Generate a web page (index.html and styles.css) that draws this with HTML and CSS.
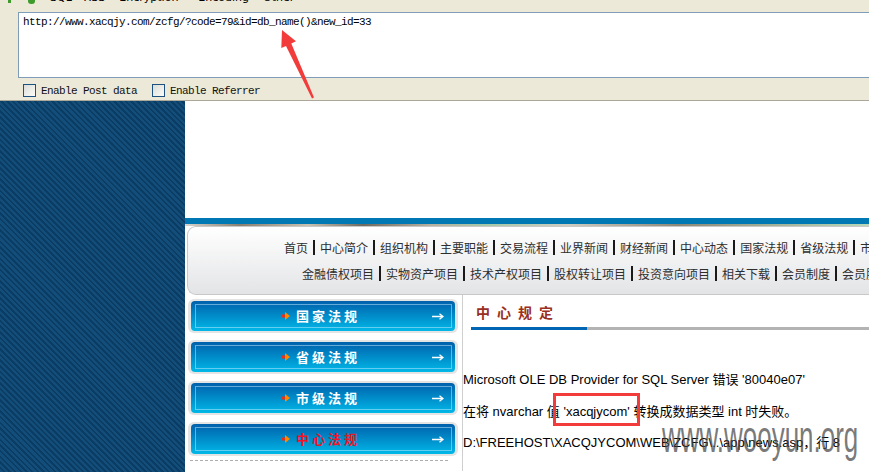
FILE: index.html
```html
<!DOCTYPE html>
<html lang="zh">
<head>
<meta charset="utf-8">
<title>中心规定</title>
<link rel="stylesheet" href="styles.css">
</head>
<body>
<div class="toolbar">
  <div class="menubar">
    <span class="mico mico1"></span>
    <span class="mico mico2"></span>
    <div class="menu-inner">
      <span class="mi mi-sql">SQL</span>
      <span class="mi mi-xss">XSS</span>
      <span class="mi mi-enc">Encryption</span>
      <span class="mi mi-cod">Encoding</span>
      <span class="mi">Other</span>
    </div>
  </div>
  <div class="urlbox">http://www.xacqjy.com/zcfg/?code=79&amp;id=db_name()&amp;new_id=33</div>
  <div class="opts">
    <label class="opt"><span class="cb"></span>Enable Post data</label>
    <label class="opt"><span class="cb"></span>Enable Referrer</label>
  </div>
</div>

<div class="page">
  <aside class="side"></aside>
  <main class="main">
    <div class="header"></div>
    <div class="bluebar"></div>
    <div class="strip"></div>
    <nav class="nav">
      <div class="navrow r1">
        <span>首页</span><i class="sep"></i><span>中心简介</span><i class="sep"></i><span>组织机构</span><i class="sep"></i><span>主要职能</span><i class="sep"></i><span>交易流程</span><i class="sep"></i><span>业界新闻</span><i class="sep"></i><span>财经新闻</span><i class="sep"></i><span>中心动态</span><i class="sep"></i><span>国家法规</span><i class="sep"></i><span>省级法规</span><i class="sep"></i><span>市级法规</span>
      </div>
      <div class="navrow r2">
        <span>金融债权项目</span><i class="sep"></i><span>实物资产项目</span><i class="sep"></i><span>技术产权项目</span><i class="sep"></i><span>股权转让项目</span><i class="sep"></i><span>投资意向项目</span><i class="sep"></i><span>相关下载</span><i class="sep"></i><span>会员制度</span><i class="sep"></i><span>会员服务</span>
      </div>
    </nav>
    <div class="content">
      <div class="lcol">
        <a class="btn"><span class="btn-in"><span class="btn-c"><svg class="bullet" width="8" height="8" viewBox="0 0 8 8"><rect x="0" y="2.5" width="3" height="3" fill="#e8301a"/><polygon points="3,0 8,4 3,8" fill="#ff8a00"/></svg><span class="btn-t">国家法规</span></span><svg class="btn-ar" width="12" height="7" viewBox="0 0 12 7"><path d="M0 3.5H10.5M7.5 0.8L11 3.5L7.5 6.2" fill="none" stroke="#fff" stroke-width="1.4"/></svg></span></a>
        <a class="btn"><span class="btn-in"><span class="btn-c"><svg class="bullet" width="8" height="8" viewBox="0 0 8 8"><rect x="0" y="2.5" width="3" height="3" fill="#e8301a"/><polygon points="3,0 8,4 3,8" fill="#ff8a00"/></svg><span class="btn-t">省级法规</span></span><svg class="btn-ar" width="12" height="7" viewBox="0 0 12 7"><path d="M0 3.5H10.5M7.5 0.8L11 3.5L7.5 6.2" fill="none" stroke="#fff" stroke-width="1.4"/></svg></span></a>
        <a class="btn"><span class="btn-in"><span class="btn-c"><svg class="bullet" width="8" height="8" viewBox="0 0 8 8"><rect x="0" y="2.5" width="3" height="3" fill="#e8301a"/><polygon points="3,0 8,4 3,8" fill="#ff8a00"/></svg><span class="btn-t">市级法规</span></span><svg class="btn-ar" width="12" height="7" viewBox="0 0 12 7"><path d="M0 3.5H10.5M7.5 0.8L11 3.5L7.5 6.2" fill="none" stroke="#fff" stroke-width="1.4"/></svg></span></a>
        <a class="btn"><span class="btn-in"><span class="btn-c"><svg class="bullet" width="8" height="8" viewBox="0 0 8 8"><rect x="0" y="2.5" width="3" height="3" fill="#e8301a"/><polygon points="3,0 8,4 3,8" fill="#ff8a00"/></svg><span class="btn-t btn-t-red">中心法规</span></span><svg class="btn-ar" width="12" height="7" viewBox="0 0 12 7"><path d="M0 3.5H10.5M7.5 0.8L11 3.5L7.5 6.2" fill="none" stroke="#fff" stroke-width="1.4"/></svg></span></a>
        <div class="dash"></div>
      </div>
      <div class="rcol">
        <h2 class="title">中心规定</h2>
        <div class="uline"></div>
        <p class="msg">Microsoft OLE DB Provider for SQL Server 错误 '80040e07'</p>
        <p class="msg">在将 nvarchar 值 'xacqjycom' 转换成数据类型 int 时失败。</p>
        <p class="msg">D:\FREEHOST\XACQJYCOM\WEB\ZCFG\..\app\news.asp，行 8</p>
      </div>
    </div>
  </main>
</div>

<div class="redbox"></div>
<div class="watermark">www.wooyun.org</div>
<svg class="arrow" width="869" height="472" viewBox="0 0 869 472">
  <polygon points="282,30 296,41.3 291.3,43.6 314,97.6 312,98.4 286,46 281.3,48" fill="#f23c3c"/>
</svg>
</body>
</html>
```

FILE: styles.css
```css
html, body {
  margin: 0;
  padding: 0;
}
body {
  width: 869px;
  height: 472px;
  overflow: hidden;
  background: #fff;
  font-family: "Liberation Sans", "Noto Sans CJK SC", sans-serif;
  position: relative;
}

/* ---------- toolbar ---------- */
.toolbar {
  height: 100px;
  background: #ECE9D8;
  border-bottom: 1px solid #ACA899;
  overflow: hidden;
}
.menubar {
  display: flex;
  align-items: flex-start;
  height: 12px;
  overflow: hidden;
}
.menu-inner {
  display: flex;
  margin-top: -8px;
  height: 12px;
  font-family: "DejaVu Sans", sans-serif;
  font-size: 11px;
  line-height: 12px;
  color: #000;
}
.mico {
  flex: none;
  display: block;
  width: 3px;
  height: 3px;
  background: #3f9c2c;
  margin-left: 8px;
}
.mico2 {
  width: 7px;
  height: 4px;
  margin-left: 17px;
  border-radius: 0 0 3px 3px;
}
.mi {
  margin-left: 14px;
}
.mi-sql { margin-left: 15px; }
.mi-xss { margin-left: 12px; }
.mi-enc { margin-left: 14px; }
.mi-cod { margin-left: 20px; }

.urlbox {
  margin-left: 18px;
  margin-right: -20px;
  height: 66px;
  box-sizing: border-box;
  border: 1px solid #7F9DB9;
  background: #fff;
  padding: 3px 4px;
  font-family: "Liberation Mono", monospace;
  font-size: 11px;
  letter-spacing: -0.6px;
  line-height: 13px;
  color: #000;
}
.opts {
  display: flex;
  align-items: center;
  margin: 6px 0 0 23px;
  height: 13px;
}
.opt {
  display: flex;
  align-items: center;
  font-family: "Liberation Mono", monospace;
  font-size: 11px;
  letter-spacing: -0.6px;
  color: #111;
  margin-right: 15px;
}
.cb {
  width: 13px;
  height: 13px;
  box-sizing: border-box;
  border: 1px solid #1C5180;
  background: linear-gradient(135deg, #DCDCD7, #FBFBF9);
  margin-right: 5px;
}

/* ---------- page ---------- */
.page {
  display: flex;
  height: 371px;
}
.side {
  width: 185px;
  flex: none;
  background: repeating-linear-gradient(45deg, #134D79 0 2.2px, #0B3C63 2.2px 4px);
}
.main {
  flex: 1;
  min-width: 0;
  overflow: hidden;
  background: #fff;
}
.header {
  height: 117px;
}
.bluebar {
  height: 6px;
  background: #0078B4;
}
.strip {
  height: 2px;
  background: linear-gradient(90deg, #d8d4cc 0, #8a7f70 8%, #c9c0b0 18%, #6f6a60 26%, #b8b0a0 36%, #a4c8a8 44%, #d0ccc0 56%, #8d8878 72%, #b8d8b8 100%);
}
.nav {
  margin-left: 2px;
  height: 69px;
  box-sizing: border-box;
  border: 1px solid #C8C8C8;
  border-right: 0;
  border-radius: 9px 0 0 9px;
  background: linear-gradient(#ffffff, #E3E4E6);
  padding-top: 7px;
  overflow: hidden;
  font-family: "Noto Sans CJK SC", sans-serif;
  font-size: 12px;
  color: #2e2e2e;
}
.navrow {
  display: flex;
  align-items: center;
  white-space: nowrap;
  height: 26px;
}
.r1 { padding-left: 96px; }
.r2 { padding-left: 114px; }
.navrow span {
  flex: none;
}
.sep {
  flex: none;
  display: inline-block;
  width: 2px;
  height: 15px;
  background: #1a1a1a;
  margin: 0 5px;
}

/* ---------- content ---------- */
.content {
  display: flex;
  height: 176px;
}
.lcol {
  width: 278px;
  flex: none;
  box-sizing: border-box;
  border-right: 1px solid #CFCFCF;
  padding: 4px 0 0 3px;
}
.btn {
  display: block;
  width: 270px;
  height: 34px;
  box-sizing: border-box;
  padding: 2px 3px;
  background: #E4E4E4;
  border-radius: 6px;
  margin-bottom: 7px;
}
.btn-in {
  position: relative;
  display: grid;
  grid-template-columns: 1fr auto 1fr;
  align-items: center;
  height: 30px;
  border-radius: 4px;
  background: linear-gradient(#0060AB, #00B8E8);
  padding-right: 4px;
}
.btn-in::before {
  content: "";
  position: absolute;
  inset: 3px 3px 3px 4px;
  border: 1px solid rgba(200, 235, 255, 0.5);
}
.btn-c {
  grid-column: 2;
  display: flex;
  align-items: center;
}
.bullet {
  display: block;
  margin-right: 6px;
}
.btn-t {
  font-family: "Noto Sans CJK SC", sans-serif;
  font-size: 13px;
  font-weight: bold;
  letter-spacing: 3px;
  color: #fff;
  line-height: 16px;
}
.btn-t-red {
  color: #F0142A;
}
.btn-ar {
  grid-column: 3;
  justify-self: end;
  display: block;
  margin-right: 7px;
}
.dash {
  width: 258px;
  margin: -3px 0 0 2px;
  border-top: 1px dashed #ADADAD;
}

.rcol {
  flex: 1;
  min-width: 0;
  font-size: 13px;
  color: #000;
}
.title {
  margin: 7px 0 0 13px;
  height: 20px;
  line-height: 20px;
  font-family: "Noto Sans CJK SC", sans-serif;
  font-size: 14px;
  font-weight: bold;
  letter-spacing: 7px;
  color: #992E22;
  padding-bottom: 5px;
}
.uline {
  margin-left: 8px;
  height: 3px;
  background: linear-gradient(90deg, #0066B3 0 116px, #B3B3B3 116px);
}
.msg {
  margin: 0;
  line-height: 31.5px;
  white-space: nowrap;
}
.msg:first-of-type {
  margin-top: 34px;
}

/* ---------- annotations (overlays) ---------- */
.redbox {
  position: absolute;
  left: 553px;
  top: 393px;
  width: 87px;
  height: 33px;
  box-sizing: border-box;
  border: 3px solid #F23B3B;
}
.watermark {
  position: absolute;
  left: 662px;
  top: 415px;
  font-family: "Liberation Sans", sans-serif;
  font-size: 44px;
  line-height: 44px;
  color: rgba(70, 70, 70, 0.72);
  transform: scaleX(0.59);
  transform-origin: 0 0;
  white-space: nowrap;
}
.arrow {
  position: absolute;
  left: 0;
  top: 0;
  pointer-events: none;
}
```
